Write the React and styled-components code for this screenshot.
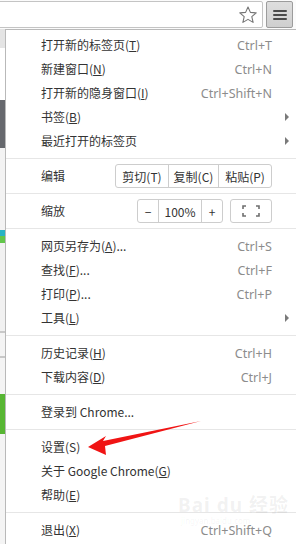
import React from "react";
import styled, { createGlobalStyle } from "styled-components";

const GlobalStyle = createGlobalStyle`
  html, body {
    margin: 0;
    padding: 0;
    background: #ffffff;
    overflow: hidden;
  }
  body {
    font-family: "Noto Sans", "Noto Sans CJK SC", sans-serif;
  }
`;

const Screen = styled.div`
  position: relative;
  width: 296px;
  height: 544px;
  overflow: hidden;
  display: flex;
  flex-direction: column;
  background: #fff;
`;

const Toolbar = styled.div`
  height: 29px;
  flex: none;
  display: flex;
  align-items: center;
  gap: 3px;
  padding-right: 3px;
  background: #fbfbfb;
`;

const Omnibox = styled.div`
  flex: 1;
  height: 25px;
  margin-left: -4px;
  display: flex;
  align-items: center;
  justify-content: flex-end;
  padding-right: 4px;
  background: #fff;
  border: 1px solid #c4c4c4;
  border-radius: 2px;
`;

const MenuButton = styled.div`
  width: 25px;
  height: 25px;
  display: flex;
  flex-direction: column;
  align-items: center;
  justify-content: center;
  gap: 2px;
  background: linear-gradient(#dedede, #cfcfcf);
  border: 1px solid #9c9c9c;
  border-radius: 2px;
`;

const Bar = styled.span`
  width: 14px;
  height: 2px;
  background: #4a4a4a;
  border-radius: 1px;
`;

const Body = styled.div`
  flex: 1;
  display: flex;
  min-height: 0;
`;

const PageStrip = styled.div`
  width: 5px;
  flex: none;
  display: flex;
  flex-direction: column;
`;

const Block = styled.div`
  height: ${(p) => p.h}px;
  flex: none;
  background: ${(p) => p.c};
`;

const Menu = styled.div`
  flex: 1;
  margin-right: -6px;
  padding-top: 3px;
  background: #fff;
  border-left: 1px solid #b9b9b9;
  border-top: 1px solid #b9b9b9;
  color: #333;
  font-size: 12px;
`;

const Item = styled.div`
  height: 24px;
  display: flex;
  align-items: center;
  padding-left: 35px;
  padding-right: 30px;
  white-space: nowrap;
`;

const Label = styled.span`
  flex: 1;
  font-family: "Noto Sans CJK SC", "Noto Sans", sans-serif;
  line-height: 24px;
`;

const Key = styled.span`
  text-decoration: ${(p) => (p.plain ? "none" : "underline")};
  text-underline-offset: 1px;
`;

const Shortcut = styled.span`
  color: #8c8c8c;
  font-family: "Noto Sans", sans-serif;
  font-size: 12.5px;
`;

const SubArrow = styled.span`
  width: 0;
  height: 0;
  margin-right: -17px;
  margin-left: auto;
  border-top: 4px solid transparent;
  border-bottom: 4px solid transparent;
  border-left: 4px solid #7a7a7a;
`;

const Separator = styled.div`
  height: 1px;
  margin: 5px 0;
  background: #e6e6e6;
`;

const Group = styled.div`
  display: flex;
  height: 22px;
  border: 1px solid #cdcdcd;
  border-radius: 3px;
  background: #fff;
  margin-left: ${(p) => p.gap ?? 0}px;
`;

const Cell = styled.div`
  width: ${(p) => p.w}px;
  display: flex;
  align-items: center;
  justify-content: center;
  font-family: "Noto Sans CJK SC", "Noto Sans", sans-serif;
  font-size: 12px;
  color: #333;
  & + & {
    border-left: 1px solid #cdcdcd;
  }
`;

const Overlay = styled.svg`
  position: absolute;
  left: 0;
  top: 0;
  pointer-events: none;
`;

const Watermark = styled.div`
  position: absolute;
  left: 178px;
  top: 494px;
  display: flex;
  flex-direction: column;
  color: rgba(120, 120, 120, 0.1);
  font-family: "Noto Sans", "Noto Sans CJK SC", sans-serif;
  pointer-events: none;
`;

const WmBig = styled.span`
  font-size: 19px;
  font-weight: 700;
  letter-spacing: 1px;
  line-height: 22px;
`;

const WmSmall = styled.span`
  font-size: 8px;
  line-height: 9px;
  padding-left: 3px;
  color: rgba(120, 120, 120, 0.07);
`;

const Star = () => (
  <svg width="20" height="20" viewBox="0 0 20 20">
    <path
      d="M10 2 L12.4 7.4 L18.2 7.9 L13.8 11.7 L15.1 17.4 L10 14.4 L4.9 17.4 L6.2 11.7 L1.8 7.9 L7.6 7.4 Z"
      fill="none"
      stroke="#757575"
      strokeWidth="1.1"
      strokeLinejoin="round"
    />
  </svg>
);

const FullscreenIcon = () => (
  <svg width="18" height="12" viewBox="0 0 18 12">
    <path
      d="M1 4 V1 H4 M14 1 H17 V4 M17 8 V11 H14 M4 11 H1 V8"
      fill="none"
      stroke="#6f6f6f"
      strokeWidth="1.6"
    />
  </svg>
);

const sections = [
  [
    { label: "打开新的标签页", k: "T", sc: "Ctrl+T" },
    { label: "新建窗口", k: "N", sc: "Ctrl+N" },
    { label: "打开新的隐身窗口", k: "I", sc: "Ctrl+Shift+N" },
    { label: "书签", k: "B", sub: true },
    { label: "最近打开的标签页", sub: true },
  ],
  "edit",
  "zoom",
  [
    { label: "网页另存为", k: "A", tail: "...", sc: "Ctrl+S" },
    { label: "查找", k: "F", tail: "...", sc: "Ctrl+F" },
    { label: "打印", k: "P", tail: "...", sc: "Ctrl+P" },
    { label: "工具", k: "L", sub: true },
  ],
  [
    { label: "历史记录", k: "H", sc: "Ctrl+H" },
    { label: "下载内容", k: "D", sc: "Ctrl+J" },
  ],
  [{ label: "登录到 Chrome..." }],
  [
    { label: "设置", k: "S", plain: true },
    { label: "关于 Google Chrome", k: "G" },
    { label: "帮助", k: "E" },
  ],
  [{ label: "退出", k: "X", sc: "Ctrl+Shift+Q" }],
];

const strip = [
  { h: 19, c: "#e4e4e4" },
  { h: 52, c: "#ffffff" },
  { h: 48, c: "#66686d" },
  { h: 82, c: "#f3f3f3" },
  { h: 6, c: "#27b3c4" },
  { h: 7, c: "#62c64a" },
  { h: 88, c: "#f1f1f1" },
  { h: 2, c: "#c8c8c8" },
  { h: 23, c: "#f4f4f4" },
  { h: 2, c: "#c8c8c8" },
  { h: 36, c: "#f4f4f4" },
  { h: 40, c: "#57b633" },
  { h: 120, c: "#f4f4f4" },
];

function MenuItem({ item }) {
  return (
    <Item>
      <Label>
        {item.label}
        {item.k && (
          <>
            (<Key plain={item.plain}>{item.k}</Key>)
          </>
        )}
        {item.tail}
      </Label>
      {item.sc && <Shortcut>{item.sc}</Shortcut>}
      {item.sub && <SubArrow />}
    </Item>
  );
}

export default function App() {
  return (
    <>
      <GlobalStyle />
      <Screen>
        <Toolbar>
          <Omnibox>
            <Star />
          </Omnibox>
          <MenuButton>
            <Bar />
            <Bar />
            <Bar />
          </MenuButton>
        </Toolbar>
        <Body>
          <PageStrip>
            {strip.map((b, i) => (
              <Block key={i} h={b.h} c={b.c} />
            ))}
          </PageStrip>
          <Menu>
            {sections.map((sec, i) => {
              const sep = i < sections.length - 1 && <Separator />;
              if (sec === "edit") {
                return (
                  <React.Fragment key={i}>
                    <Item>
                      <Label>编辑</Label>
                      <Group>
                        <Cell w={52}>剪切(T)</Cell>
                        <Cell w={49}>复制(C)</Cell>
                        <Cell w={52}>粘贴(P)</Cell>
                      </Group>
                    </Item>
                    {sep}
                  </React.Fragment>
                );
              }
              if (sec === "zoom") {
                return (
                  <React.Fragment key={i}>
                    <Item>
                      <Label>缩放</Label>
                      <Group>
                        <Cell w={20}>−</Cell>
                        <Cell w={42}>100%</Cell>
                        <Cell w={20}>+</Cell>
                      </Group>
                      <Group gap={7}>
                        <Cell w={40}>
                          <FullscreenIcon />
                        </Cell>
                      </Group>
                    </Item>
                    {sep}
                  </React.Fragment>
                );
              }
              return (
                <React.Fragment key={i}>
                  {sec.map((item) => (
                    <MenuItem key={item.label} item={item} />
                  ))}
                  {sep}
                </React.Fragment>
              );
            })}
          </Menu>
        </Body>
        <Watermark>
          <WmBig>Bai du 经验</WmBig>
          <WmSmall>jingyan.baidu.com</WmSmall>
        </Watermark>
        <Overlay width="296" height="544" viewBox="0 0 296 544">
          <polygon
            points="88,447 106,436 103,441 201,421 105,446 106,455"
            fill="#f01414"
          />
        </Overlay>
      </Screen>
    </>
  );
}
